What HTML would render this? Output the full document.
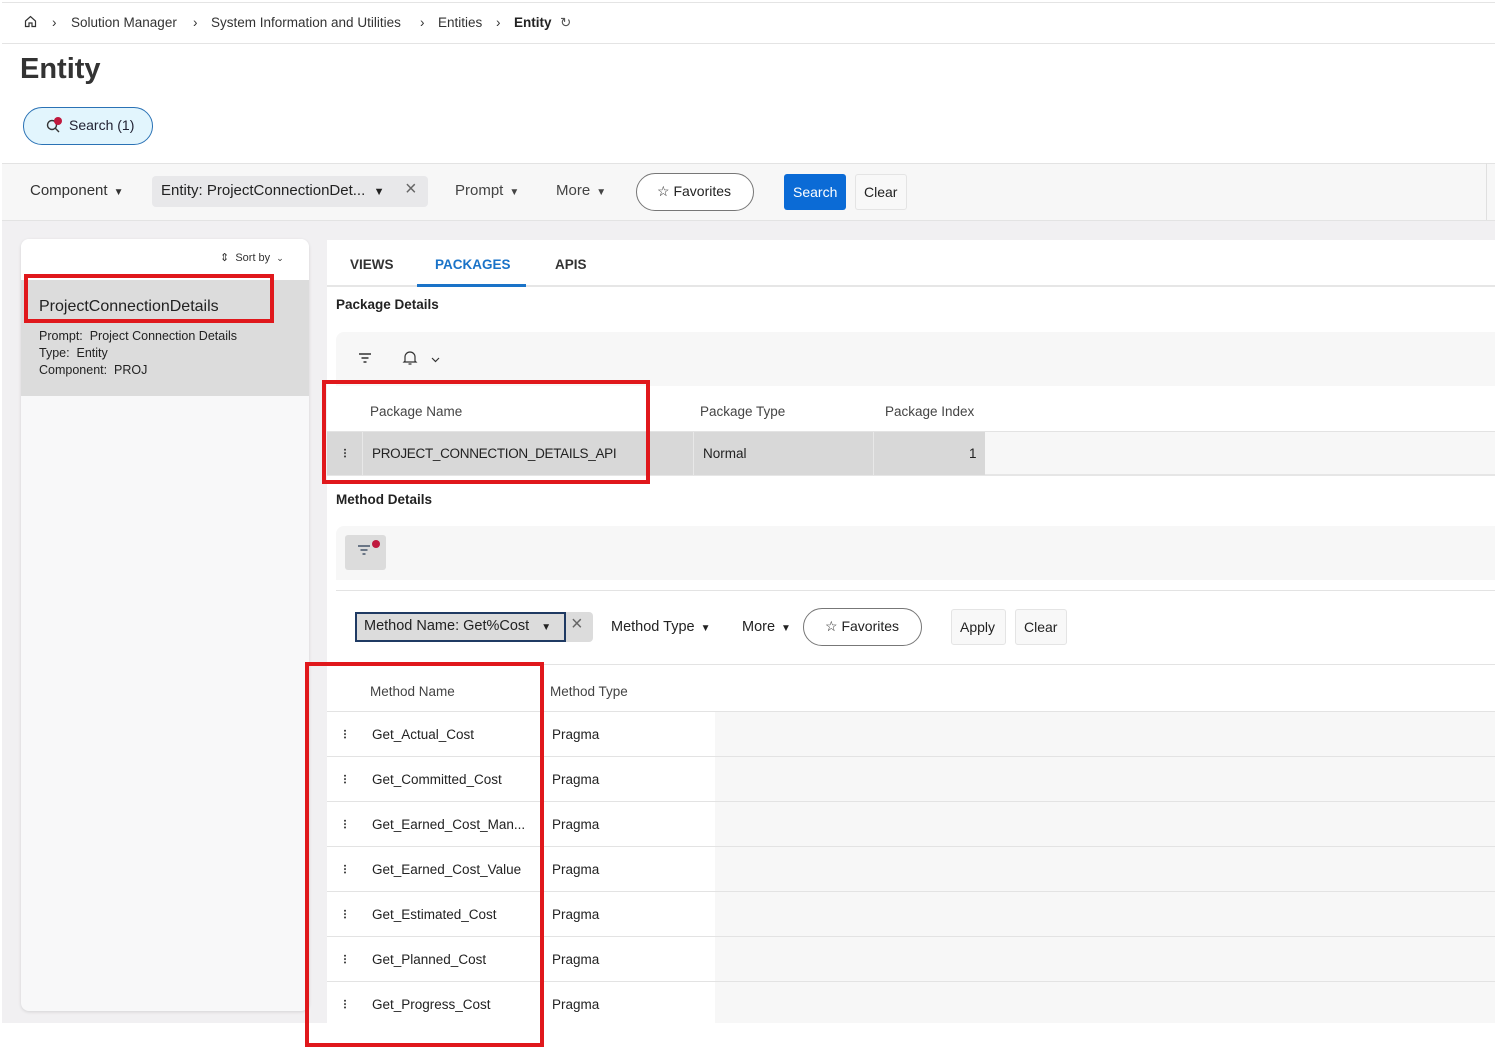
<!DOCTYPE html>
<html><head><meta charset="utf-8"><style>
*{box-sizing:border-box;margin:0;padding:0}
body{width:1495px;height:1047px;background:#fff;font-family:"Liberation Sans",sans-serif;color:#222;position:relative;overflow:hidden;font-size:14px}
.a{position:absolute}
.t{position:absolute;white-space:nowrap}
.red{position:absolute;border:4px solid #e0181c}
.tri{font-size:10px;margin-left:6px}
.dots{position:absolute;width:2px;height:10px;background:radial-gradient(circle,#444 0.9px,transparent 1.1px) 0 0/2px 3.4px repeat-y}
.bc{position:absolute;top:15px;font-size:13.5px;color:#333;white-space:nowrap}
</style></head><body>
<div class="a" style="left:2px;top:2px;width:1493px;height:1px;background:#e4e4e4"></div>
<div class="a" style="left:2px;top:43px;width:1493px;height:1px;background:#e4e4e4"></div>
<svg class="a" style="left:24px;top:15px" width="13" height="13" viewBox="0 0 13 13"><path d="M1.5 6 L6.5 1.5 L11.5 6 V11.5 H8 V8 H5 V11.5 H1.5 Z" fill="none" stroke="#333" stroke-width="1.2"/></svg>
<div class="bc" style="left:52px">›</div>
<div class="bc" style="left:71px">Solution Manager</div>
<div class="bc" style="left:193px">›</div>
<div class="bc" style="left:211px">System Information and Utilities</div>
<div class="bc" style="left:420px">›</div>
<div class="bc" style="left:438px">Entities</div>
<div class="bc" style="left:496px">›</div>
<div class="bc" style="left:514px;font-weight:bold;color:#222">Entity</div>
<div class="bc" style="left:560px;color:#555">↻</div>
<div class="t" style="left:20px;top:53px;font-size:29px;font-weight:bold;color:#333">Entity</div>
<div class="a" style="left:23px;top:107px;width:130px;height:38px;border:1.5px solid #2a72b5;border-radius:19px;background:#e2f5fd"></div>
<svg class="a" style="left:45px;top:116px" width="20" height="20" viewBox="0 0 20 20"><circle cx="7" cy="9" r="4.5" fill="none" stroke="#333" stroke-width="1.4"/><path d="M10.3 12.3 L14 16" stroke="#333" stroke-width="1.4"/><circle cx="13" cy="5" r="4" fill="#c0193e"/></svg>
<div class="t" style="left:69px;top:117px;font-size:14px;color:#223">Search (1)</div>
<div class="a" style="left:2px;top:163px;width:1493px;height:58px;background:#f7f7f7;border-top:1px solid #e3e3e3;border-bottom:1px solid #e3e3e3"></div>
<div class="a" style="left:1486px;top:163px;width:1px;height:57px;background:#e0e0e0"></div>
<div class="t" style="left:30px;top:182px;font-size:15px;color:#333">Component<span class="tri">▼</span></div>
<div class="a" style="left:152px;top:176px;width:276px;height:31px;background:#e8e8ea;border-radius:4px"></div>
<div class="t" style="left:161px;top:182px;font-size:15px;color:#222">Entity: ProjectConnectionDet...&nbsp;&nbsp;<span style="font-size:11px">▼</span></div>
<div class="t" style="left:405px;top:178px;font-size:20px;color:#666">×</div>
<div class="t" style="left:455px;top:182px;font-size:15px;color:#444">Prompt<span class="tri">▼</span></div>
<div class="t" style="left:556px;top:182px;font-size:15px;color:#444">More<span class="tri">▼</span></div>
<div class="a" style="left:636px;top:173px;width:118px;height:38px;border:1px solid #777;border-radius:19px;background:#fff"></div>
<div class="t" style="left:657px;top:183px;font-size:14px;color:#222">☆ Favorites</div>
<div class="a" style="left:784px;top:174px;width:62px;height:36px;background:#0b6bd6;border-radius:3px"></div>
<div class="t" style="left:793px;top:184px;font-size:14px;color:#fff">Search</div>
<div class="a" style="left:855px;top:174px;width:52px;height:36px;border:1px solid #e4e4e4;border-radius:3px;background:#f8f8f8"></div>
<div class="t" style="left:864px;top:184px;font-size:14px;color:#222">Clear</div>
<div class="a" style="left:2px;top:221px;width:1493px;height:802px;background:#f1f0f2"></div>
<div class="a" style="left:21px;top:239px;width:288px;height:772px;background:#f8f8f9;border-radius:8px;box-shadow:0 1px 3px rgba(0,0,0,.12)"></div>
<div class="a" style="left:21px;top:239px;width:288px;height:41px;background:#fff;border-radius:8px 8px 0 0"></div>
<div class="t" style="left:220px;top:251px;font-size:11px;color:#333">⇕&nbsp; Sort by&nbsp; <span style="font-size:9px">⌄</span></div>
<div class="a" style="left:21px;top:280px;width:288px;height:116px;background:#dcdcdc"></div>
<div class="t" style="left:39px;top:298px;font-size:16px;color:#222">ProjectConnectionDetails</div>
<div class="t" style="left:39px;top:328px;font-size:12.5px;color:#222;line-height:17px">Prompt:&nbsp; Project Connection Details<br>Type:&nbsp; Entity<br>Component:&nbsp; PROJ</div>
<div class="red" style="left:24px;top:274px;width:250px;height:49px"></div>
<div class="a" style="left:327px;top:240px;width:1168px;height:783px;background:#fff"></div>
<div class="a" style="left:327px;top:285px;width:1168px;height:2px;background:#e6e6e6"></div>
<div class="a" style="left:417px;top:284px;width:109px;height:3px;background:#1a73c8"></div>
<div class="t" style="left:350px;top:257px;font-size:13.5px;font-weight:bold;color:#333">VIEWS</div>
<div class="t" style="left:435px;top:257px;font-size:13.5px;font-weight:bold;color:#1a73c8">PACKAGES</div>
<div class="t" style="left:555px;top:257px;font-size:13.5px;font-weight:bold;color:#333">APIS</div>
<div class="t" style="left:336px;top:297px;font-size:13.5px;font-weight:bold;color:#222">Package Details</div>
<div class="a" style="left:336px;top:332px;width:1159px;height:54px;background:#f7f7f7;border-radius:8px 0 0 0"></div>
<svg class="a" style="left:358px;top:352px" width="14" height="12"><path d="M1 2H13M3.5 6H10.5M5.5 10H8.5" stroke="#333" stroke-width="1.4"/></svg>
<svg class="a" style="left:402px;top:350px" width="40" height="16"><path d="M3 11 V7 A5 5 0 0 1 13 7 V11 L14 12 H2 Z M6.5 14 H9.5" fill="none" stroke="#333" stroke-width="1.2"/><path d="M30 8 L33.5 11.5 L37 8" fill="none" stroke="#333" stroke-width="1.2"/></svg>
<div class="a" style="left:327px;top:386px;width:1168px;height:46px;background:#fff;border-bottom:1px solid #e3e3e3"></div>
<div class="t" style="left:370px;top:404px;font-size:13.5px;color:#444">Package Name</div>
<div class="t" style="left:700px;top:404px;font-size:13.5px;color:#444">Package Type</div>
<div class="t" style="left:885px;top:404px;font-size:13.5px;color:#444">Package Index</div>
<div class="a" style="left:327px;top:432px;width:1168px;height:44px;background:#f7f7f7;border-bottom:2px solid #e6e6e6"></div>
<div class="a" style="left:327px;top:432px;width:658px;height:43px;background:#d8d8d8"></div>
<div class="a" style="left:362px;top:432px;width:1px;height:43px;background:#e8e8e8"></div>
<div class="a" style="left:693px;top:432px;width:1px;height:43px;background:#e8e8e8"></div>
<div class="a" style="left:873px;top:432px;width:1px;height:43px;background:#e8e8e8"></div>
<div class="dots" style="left:344px;top:448px"></div>
<div class="t" style="left:372px;top:446px;font-size:13.5px;color:#222;letter-spacing:-0.3px">PROJECT_CONNECTION_DETAILS_API</div>
<div class="t" style="left:703px;top:446px;font-size:13.5px;color:#222">Normal</div>
<div class="t" style="left:969px;top:446px;font-size:13.5px;color:#222">1</div>
<div class="red" style="left:322px;top:380px;width:328px;height:104px"></div>
<div class="t" style="left:336px;top:492px;font-size:13.5px;font-weight:bold;color:#222">Method Details</div>
<div class="a" style="left:336px;top:526px;width:1159px;height:54px;background:#f7f7f7;border-radius:8px 0 0 0"></div>
<div class="a" style="left:345px;top:535px;width:41px;height:35px;background:#dcdcdc;border-radius:3px"></div>
<svg class="a" style="left:357px;top:539px" width="26" height="22"><path d="M1 7H13M3.5 11H10.5M5.5 15H8.5" stroke="#44546a" stroke-width="1.4"/><circle cx="19" cy="5" r="4" fill="#c0193e"/></svg>
<div class="a" style="left:336px;top:590px;width:1159px;height:75px;background:#fff;border-top:1px solid #e3e3e3;border-bottom:1px solid #e3e3e3"></div>
<div class="a" style="left:355px;top:612px;width:238px;height:30px;background:#dcdcdc;border-radius:0 4px 4px 0"></div>
<div class="a" style="left:355px;top:612px;width:211px;height:30px;border:2px solid #1f3a63"></div>
<div class="t" style="left:364px;top:618px;font-size:14.5px;color:#222">Method Name: Get%Cost&nbsp;&nbsp;&nbsp;<span style="font-size:10px">▼</span></div>
<div class="t" style="left:571px;top:613px;font-size:20px;color:#666">×</div>
<div class="t" style="left:611px;top:619px;font-size:14.5px;color:#222">Method Type<span class="tri">▼</span></div>
<div class="t" style="left:742px;top:619px;font-size:14.5px;color:#222">More<span class="tri">▼</span></div>
<div class="a" style="left:803px;top:608px;width:119px;height:38px;border:1px solid #777;border-radius:19px;background:#fff"></div>
<div class="t" style="left:825px;top:618px;font-size:14px;color:#222">☆ Favorites</div>
<div class="a" style="left:951px;top:609px;width:55px;height:36px;border:1px solid #e4e4e4;border-radius:3px;background:#f8f8f8"></div>
<div class="t" style="left:960px;top:619px;font-size:14px;color:#222">Apply</div>
<div class="a" style="left:1015px;top:609px;width:52px;height:36px;border:1px solid #e4e4e4;border-radius:3px;background:#f8f8f8"></div>
<div class="t" style="left:1024px;top:619px;font-size:14px;color:#222">Clear</div>
<div class="t" style="left:370px;top:684px;font-size:13.5px;color:#444">Method Name</div>
<div class="t" style="left:550px;top:684px;font-size:13.5px;color:#444">Method Type</div>
<div class="a" style="left:715px;top:711px;width:780px;height:312px;background:#f7f7f7"></div>
<div class="a" style="left:327px;top:711px;width:1168px;height:1px;background:#e3e3e3"></div>
<div class="a" style="left:327px;top:756px;width:1168px;height:1px;background:#e3e3e3"></div>
<div class="a" style="left:327px;top:801px;width:1168px;height:1px;background:#e3e3e3"></div>
<div class="a" style="left:327px;top:846px;width:1168px;height:1px;background:#e3e3e3"></div>
<div class="a" style="left:327px;top:891px;width:1168px;height:1px;background:#e3e3e3"></div>
<div class="a" style="left:327px;top:936px;width:1168px;height:1px;background:#e3e3e3"></div>
<div class="a" style="left:327px;top:981px;width:1168px;height:1px;background:#e3e3e3"></div>
<div class="dots" style="left:344px;top:729px"></div><div class="t" style="left:372px;top:727px;font-size:13.5px">Get_Actual_Cost</div><div class="t" style="left:552px;top:727px;font-size:13.5px">Pragma</div>
<div class="dots" style="left:344px;top:774px"></div><div class="t" style="left:372px;top:772px;font-size:13.5px">Get_Committed_Cost</div><div class="t" style="left:552px;top:772px;font-size:13.5px">Pragma</div>
<div class="dots" style="left:344px;top:819px"></div><div class="t" style="left:372px;top:817px;font-size:13.5px">Get_Earned_Cost_Man...</div><div class="t" style="left:552px;top:817px;font-size:13.5px">Pragma</div>
<div class="dots" style="left:344px;top:864px"></div><div class="t" style="left:372px;top:862px;font-size:13.5px">Get_Earned_Cost_Value</div><div class="t" style="left:552px;top:862px;font-size:13.5px">Pragma</div>
<div class="dots" style="left:344px;top:909px"></div><div class="t" style="left:372px;top:907px;font-size:13.5px">Get_Estimated_Cost</div><div class="t" style="left:552px;top:907px;font-size:13.5px">Pragma</div>
<div class="dots" style="left:344px;top:954px"></div><div class="t" style="left:372px;top:952px;font-size:13.5px">Get_Planned_Cost</div><div class="t" style="left:552px;top:952px;font-size:13.5px">Pragma</div>
<div class="dots" style="left:344px;top:999px"></div><div class="t" style="left:372px;top:997px;font-size:13.5px">Get_Progress_Cost</div><div class="t" style="left:552px;top:997px;font-size:13.5px">Pragma</div>
<div class="red" style="left:305px;top:662px;width:239px;height:385px"></div>
</body></html>
